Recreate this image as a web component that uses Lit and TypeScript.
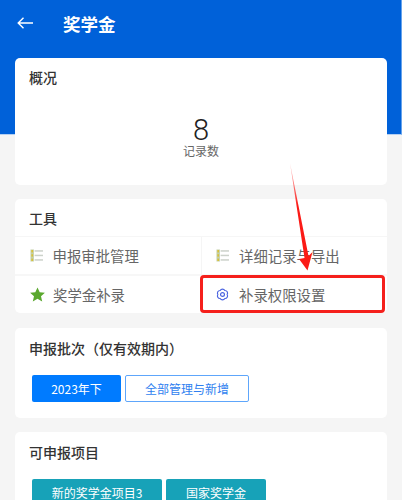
import { LitElement, html, css } from "lit";
import { customElement } from "lit/decorators.js";

const listIcon = html`<svg class="ico" viewBox="0 0 13 13" width="13" height="13">
  <rect x="0.5" y="0.5" width="3.4" height="12" fill="#c4d0a8"/>
  <rect x="1.4" y="1" width="1.6" height="2.4" fill="#d9c13a"/>
  <rect x="1.4" y="5.2" width="1.6" height="2.4" fill="#d9c13a"/>
  <rect x="1.4" y="9.6" width="1.6" height="2.4" fill="#d9c13a"/>
  <rect x="4.6" y="1.2" width="8.4" height="1.5" fill="#ccd2ca"/>
  <rect x="4.6" y="5.7" width="8.4" height="1.5" fill="#ccd2ca"/>
  <rect x="4.6" y="10.2" width="8.4" height="1.5" fill="#ccd2ca"/>
</svg>`;

const starIcon = html`<svg class="ico" viewBox="0 0 15 15" width="15" height="15">
  <path d="M7.5 0.4 9.7 5.2 14.9 5.8 11 9.3 12.2 14.5 7.5 11.8 2.8 14.5 4 9.3 0.1 5.8 5.3 5.2Z" fill="#5aa82e"/>
</svg>`;

const gearIcon = html`<svg class="ico" viewBox="0 0 14 14" width="13" height="13" fill="none" stroke="#4a63e0" stroke-width="1.25" stroke-linejoin="round">
  <path d="M12 7A2.8 2.8 0 0 1 9.5 11.33 2.8 2.8 0 0 1 4.5 11.33 2.8 2.8 0 0 1 2 7 2.8 2.8 0 0 1 4.5 2.67 2.8 2.8 0 0 1 9.5 2.67 2.8 2.8 0 0 1 12 7Z"/>
  <circle cx="7" cy="7" r="2.1"/>
</svg>`;

@customElement("app-root")
export class AppRoot extends LitElement {
  static styles = css`
    :host {
      display: block;
      position: relative;
      width: 402px;
      height: 500px;
      overflow: hidden;
      background: #f5f5f5;
      font-family: "Noto Sans CJK SC", "Liberation Sans", sans-serif;
      color: #333;
    }
    .hero {
      background: #0061d9;
      box-sizing: content-box;
      width: 401px;
      height: 134px;
      border-right: 1px solid #66a3ec;
      border-bottom: 1px solid #b5d0f2;
      margin-bottom: -77px;
    }
    .bar {
      display: flex;
      align-items: center;
      height: 48px;
      padding-left: 17px;
      color: #fff;
    }
    .bar svg { display: block; margin-top: -3px; }
    .bar h1 {
      margin: 0 0 0 30px;
      font-size: 17.5px;
      font-weight: 700;
      line-height: 48px;
    }
    .stack {
      display: flex;
      flex-direction: column;
      gap: 14px;
      padding: 0 15px;
      position: relative;
    }
    .card {
      background: #fff;
      border-radius: 5px;
      box-sizing: border-box;
    }
    .title {
      font-size: 14px;
      font-weight: 500;
      line-height: 20px;
      color: #333;
      padding-left: 14px;
    }
    .overview { height: 127px; padding-top: 9px; }
    .stat { text-align: center; margin-top: 30px; }
    .num {
      font-family: Roboto, sans-serif;
      font-weight: 300;
      font-size: 29px;
      line-height: 26px;
      color: #222;
    }
    .lbl { font-size: 12px; line-height: 16px; color: #666; }
    .tools { height: 114px; padding-top: 9px; }
    .tools .title { height: 28px; }
    .grid {
      display: grid;
      grid-template-columns: 187px 185px;
      grid-template-rows: 39px 37px;
      border-top: 1px solid #f6f6f6;
    }
    .cell {
      display: flex;
      align-items: center;
      padding-left: 14.5px;
      font-size: 14.4px;
      color: #666;
      box-sizing: border-box;
    }
    .cell:nth-child(1), .cell:nth-child(2) { border-bottom: 2px solid #f7f7f7; }
    .cell:nth-child(odd) { border-right: 1px solid #f5f5f5; }
    .cell:nth-child(even) { padding-left: 14px; }
    .cell .ico { flex: none; margin-right: 10px; }
    .cell.star .ico { margin-right: 8.5px; }
    .batch { height: 90px; padding-top: 10px; margin-top: 1px; }
    .projects { height: 120px; padding-top: 10px; }
    .btns {
      display: flex;
      gap: 4px;
      padding: 17px 0 0 17px;
    }
    .btn {
      display: flex;
      align-items: center;
      justify-content: center;
      box-sizing: border-box;
      height: 27px;
      font-size: 12px;
      border-radius: 2px;
    }
    .primary { width: 89px; background: #007bff; color: #fff; }
    .outline { width: 124px; background: #fff; color: #2f7ff0; border: 1px solid #5ea6fb; }
    .teal { background: #17a2b8; color: #fff; }
    .teal.a { width: 130px; }
    .teal.b { width: 100px; }
    .mark {
      position: absolute;
      left: 200px;
      top: 275px;
      width: 185px;
      height: 38px;
      box-sizing: border-box;
      border: 3px solid #f5201c;
      border-radius: 4px;
    }
    .arrow { position: absolute; left: 280px; top: 155px; }
  `;

  render() {
    return html`
      <div class="hero">
        <div class="bar">
          <svg viewBox="0 0 16 12" width="16" height="12" fill="none" stroke="#fff" stroke-width="1.4">
            <path d="M16 6H1.2M6.5 .7 1.2 6l5.3 5.3"/>
          </svg>
          <h1>奖学金</h1>
        </div>
      </div>
      <div class="stack">
        <section class="card overview">
          <div class="title">概况</div>
          <div class="stat">
            <div class="num">8</div>
            <div class="lbl">记录数</div>
          </div>
        </section>
        <section class="card tools">
          <div class="title">工具</div>
          <div class="grid">
            <div class="cell">${listIcon}<span>申报审批管理</span></div>
            <div class="cell">${listIcon}<span>详细记录与导出</span></div>
            <div class="cell star">${starIcon}<span>奖学金补录</span></div>
            <div class="cell">${gearIcon}<span>补录权限设置</span></div>
          </div>
        </section>
        <section class="card batch">
          <div class="title">申报批次（仅有效期内）</div>
          <div class="btns">
            <div class="btn primary">2023年下</div>
            <div class="btn outline">全部管理与新增</div>
          </div>
        </section>
        <section class="card projects">
          <div class="title">可申报项目</div>
          <div class="btns">
            <div class="btn teal a">新的奖学金项目3</div>
            <div class="btn teal b">国家奖学金</div>
          </div>
        </section>
      </div>
      <div class="mark"></div>
      <svg class="arrow" width="40" height="125" viewBox="0 0 40 125">
        <defs>
          <linearGradient id="fade" x1="0" y1="0" x2="0" y2="1">
            <stop offset="0" stop-color="#ff6060" stop-opacity="0.35"/>
            <stop offset="0.4" stop-color="#fb1a16"/>
            <stop offset="1" stop-color="#fb1a16"/>
          </linearGradient>
        </defs>
        <path d="M10 8 L28.5 101 L32.5 97 L27.5 115.5 L19 104 L24.5 103 Z" fill="url(#fade)"/>
      </svg>
    `;
  }
}
